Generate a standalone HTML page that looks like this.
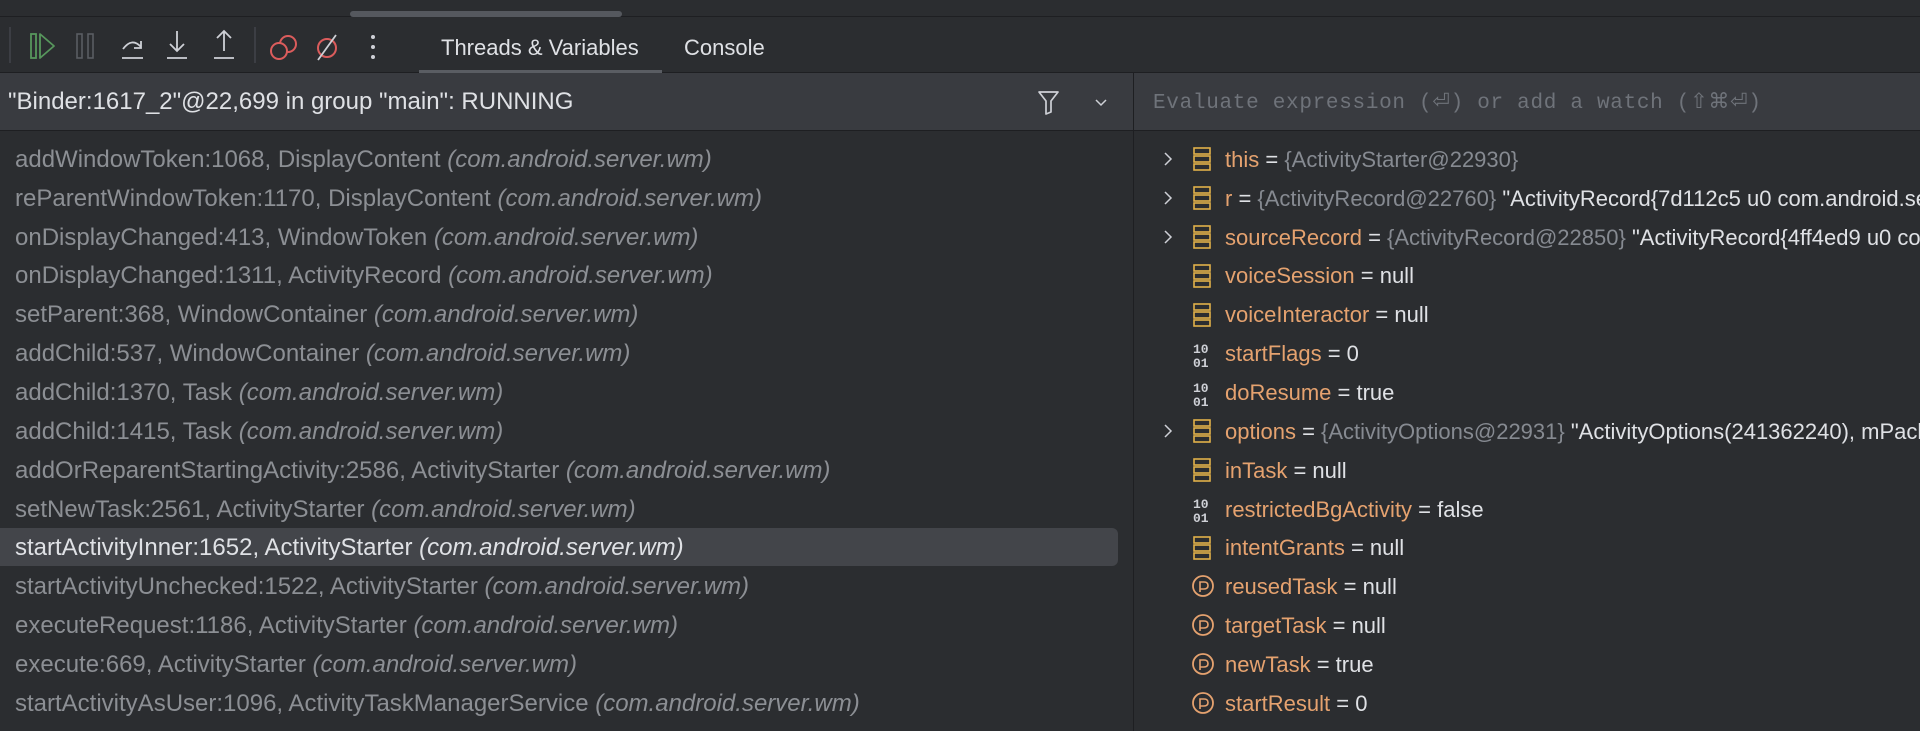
<!DOCTYPE html>
<html><head><meta charset="utf-8"><style>
*{margin:0;padding:0;box-sizing:border-box}
body{width:1920px;height:731px;background:#2b2d30;font-family:"Liberation Sans",sans-serif;overflow:hidden;position:relative;color:#dfe1e5}
.top{position:absolute;left:0;top:0;width:1920px;height:17px;background:#2b2d30;border-bottom:1px solid #1e1f22}
.thumb{position:absolute;left:350px;top:11px;width:272px;height:6px;border-radius:3px;background:#55585e}
.tb{position:absolute;left:0;top:17px;width:1920px;height:56px;background:#2b2d30;border-bottom:1px solid #1e1f22}
.tab{position:absolute;top:18px;font-size:22px;color:#dfe1e5}
.ul{position:absolute;left:419px;top:53px;width:243px;height:3px;background:#5a5d63}
.hdr{position:absolute;left:0;top:73px;width:1920px;height:58px;background:#393b40;border-bottom:1px solid #1e1f22}
.vdiv{position:absolute;left:1133px;top:73px;width:1px;height:658px;background:#1e1f22}
.row{position:absolute;left:15px;font-size:24px;color:#8c8f94;white-space:nowrap;line-height:39px;height:39px}
.row i{font-style:italic}
.sel{position:absolute;left:0;top:528px;width:1118px;height:38px;background:#43454a;border-radius:0 6px 6px 0}
.v{position:absolute;left:1225px;font-size:22px;white-space:nowrap;line-height:39px;height:39px;color:#dfe1e5}
.n{color:#e5a26f}.g{color:#868a91}
</style></head><body>
<div class="top"><div class="thumb"></div></div>
<div class="tb">
<svg width="420" height="56" style="position:absolute;left:0;top:0">
<line x1="10" y1="10" x2="10" y2="46" stroke="#43454a" stroke-width="1.5"/>
<rect x="31" y="17" width="5" height="24" fill="none" stroke="#57965c" stroke-width="1.8"/>
<path d="M40 17 L54 29 L40 41 Z" fill="none" stroke="#57965c" stroke-width="1.8" stroke-linejoin="round"/>
<rect x="77" y="17" width="5" height="24" fill="none" stroke="#5a5d63" stroke-width="1.6"/>
<rect x="88" y="17" width="5" height="24" fill="none" stroke="#5a5d63" stroke-width="1.6"/>
<path d="M123 32 Q132 20 141 30 M134 31 L141 31 L141 24 M122 41 L143 41" fill="none" stroke="#ced0d6" stroke-width="1.8"/>
<path d="M177 14 L177 34 M170 27 L177 34 L184 27 M167 41 L187 41" fill="none" stroke="#ced0d6" stroke-width="1.8"/>
<path d="M224 14 L224 34 M217 21 L224 14 L231 21 M214 41 L234 41" fill="none" stroke="#ced0d6" stroke-width="1.8"/>
<line x1="255" y1="10" x2="255" y2="46" stroke="#43454a" stroke-width="1.5"/>
<circle cx="288" cy="27" r="8" fill="none" stroke="#db5c5c" stroke-width="2"/>
<circle cx="279" cy="34" r="8" fill="#2b2d30" stroke="#db5c5c" stroke-width="2"/>
<circle cx="327" cy="31" r="9" fill="none" stroke="#db5c5c" stroke-width="2"/>
<line x1="318" y1="43" x2="336" y2="18" stroke="#ced0d6" stroke-width="1.8"/>
<circle cx="373" cy="20" r="2" fill="#ced0d6"/><circle cx="373" cy="30" r="2" fill="#ced0d6"/><circle cx="373" cy="40" r="2" fill="#ced0d6"/>
</svg>
<div class="tab" style="left:441px">Threads &amp; Variables</div>
<div class="tab" style="left:684px">Console</div>
<div class="ul"></div>
</div>
<div class="hdr">
<div style="position:absolute;left:8px;top:15px;font-size:24px;color:#dfe1e5">"Binder:1617_2"@22,699 in group "main": RUNNING</div>
<svg width="30" height="30" style="position:absolute;left:1034px;top:14px"><path d="M5 5 L24 5 L17 14 L17 25 L12 27 L12 14 Z" fill="none" stroke="#ced0d6" stroke-width="1.7" stroke-linejoin="round"/></svg>
<svg width="20" height="20" style="position:absolute;left:1092px;top:20px"><path d="M4 7 L9 12 L14 7" fill="none" stroke="#ced0d6" stroke-width="1.5"/></svg>
<div style="position:absolute;left:1153px;top:16px;font-family:'Liberation Mono',monospace;font-size:21px;letter-spacing:0.7px;color:#6f737a">Evaluate expression (⏎) or add a watch (⇧⌘⏎)</div>
</div>
<div class="vdiv"></div>
<div class="sel"></div>
<div class="row" style="top:140px">addWindowToken:1068, DisplayContent <i>(com.android.server.wm)</i></div>
<div class="row" style="top:179px">reParentWindowToken:1170, DisplayContent <i>(com.android.server.wm)</i></div>
<div class="row" style="top:218px">onDisplayChanged:413, WindowToken <i>(com.android.server.wm)</i></div>
<div class="row" style="top:256px">onDisplayChanged:1311, ActivityRecord <i>(com.android.server.wm)</i></div>
<div class="row" style="top:295px">setParent:368, WindowContainer <i>(com.android.server.wm)</i></div>
<div class="row" style="top:334px">addChild:537, WindowContainer <i>(com.android.server.wm)</i></div>
<div class="row" style="top:373px">addChild:1370, Task <i>(com.android.server.wm)</i></div>
<div class="row" style="top:412px">addChild:1415, Task <i>(com.android.server.wm)</i></div>
<div class="row" style="top:451px">addOrReparentStartingActivity:2586, ActivityStarter <i>(com.android.server.wm)</i></div>
<div class="row" style="top:490px">setNewTask:2561, ActivityStarter <i>(com.android.server.wm)</i></div>
<div class="row" style="top:528px;color:#dfe1e5">startActivityInner:1652, ActivityStarter <i>(com.android.server.wm)</i></div>
<div class="row" style="top:567px">startActivityUnchecked:1522, ActivityStarter <i>(com.android.server.wm)</i></div>
<div class="row" style="top:606px">executeRequest:1186, ActivityStarter <i>(com.android.server.wm)</i></div>
<div class="row" style="top:645px">execute:669, ActivityStarter <i>(com.android.server.wm)</i></div>
<div class="row" style="top:684px">startActivityAsUser:1096, ActivityTaskManagerService <i>(com.android.server.wm)</i></div>

<svg width="110" height="731" style="position:absolute;left:1150px;top:0">
<defs>
<g id="obj"><rect x="0" y="0" width="16" height="6" fill="none" stroke="#e0b04a" stroke-width="1.6"/><rect x="0" y="8" width="16" height="6" fill="none" stroke="#e0b04a" stroke-width="1.6"/><rect x="0" y="16" width="16" height="6" fill="none" stroke="#e0b04a" stroke-width="1.6"/></g>
<g id="pr"><circle cx="11" cy="11" r="10" fill="none" stroke="#e5a26f" stroke-width="1.8"/><path d="M8 17 L8 7 L12 7 Q16 7 16 10.5 Q16 14 12 14 L8 14" fill="none" stroke="#e5a26f" stroke-width="1.6"/></g>
<path id="chev" d="M0 0 L6 6 L0 12" fill="none" stroke="#ced0d6" stroke-width="1.5"/>
</defs>
<use href="#chev" x="15" y="153"/><use href="#obj" x="44" y="148"/>
<use href="#chev" x="15" y="192"/><use href="#obj" x="44" y="187"/>
<use href="#chev" x="15" y="231"/><use href="#obj" x="44" y="226"/>
<use href="#obj" x="44" y="265"/>
<use href="#obj" x="44" y="304"/>
<text x="43" y="353" font-family="Liberation Mono,monospace" font-size="13" font-weight="bold" fill="#ced0d6">10</text><text x="43" y="367" font-family="Liberation Mono,monospace" font-size="13" font-weight="bold" fill="#ced0d6">01</text>
<text x="43" y="392" font-family="Liberation Mono,monospace" font-size="13" font-weight="bold" fill="#ced0d6">10</text><text x="43" y="406" font-family="Liberation Mono,monospace" font-size="13" font-weight="bold" fill="#ced0d6">01</text>
<use href="#chev" x="15" y="425"/><use href="#obj" x="44" y="420"/>
<use href="#obj" x="44" y="459"/>
<text x="43" y="508" font-family="Liberation Mono,monospace" font-size="13" font-weight="bold" fill="#ced0d6">10</text><text x="43" y="522" font-family="Liberation Mono,monospace" font-size="13" font-weight="bold" fill="#ced0d6">01</text>
<use href="#obj" x="44" y="537"/>
<use href="#pr" x="42" y="575"/>
<use href="#pr" x="42" y="614"/>
<use href="#pr" x="42" y="653"/>
<use href="#pr" x="42" y="692"/>
</svg>
<div class="v" style="top:140px"><span class="n">this</span> = <span class="g">{ActivityStarter@22930}</span></div>
<div class="v" style="top:179px"><span class="n">r</span> = <span class="g">{ActivityRecord@22760}</span> "ActivityRecord{7d112c5 u0 com.android.settings}"</div>
<div class="v" style="top:218px"><span class="n">sourceRecord</span> = <span class="g">{ActivityRecord@22850}</span> "ActivityRecord{4ff4ed9 u0 com.android.launcher}"</div>
<div class="v" style="top:256px"><span class="n">voiceSession</span> = null</div>
<div class="v" style="top:295px"><span class="n">voiceInteractor</span> = null</div>
<div class="v" style="top:334px"><span class="n">startFlags</span> = 0</div>
<div class="v" style="top:373px"><span class="n">doResume</span> = true</div>
<div class="v" style="top:412px"><span class="n">options</span> = <span class="g">{ActivityOptions@22931}</span> "ActivityOptions(241362240), mPackageName"</div>
<div class="v" style="top:451px"><span class="n">inTask</span> = null</div>
<div class="v" style="top:490px"><span class="n">restrictedBgActivity</span> = false</div>
<div class="v" style="top:528px"><span class="n">intentGrants</span> = null</div>
<div class="v" style="top:567px"><span class="n">reusedTask</span> = null</div>
<div class="v" style="top:606px"><span class="n">targetTask</span> = null</div>
<div class="v" style="top:645px"><span class="n">newTask</span> = true</div>
<div class="v" style="top:684px"><span class="n">startResult</span> = 0</div>
</body></html>
